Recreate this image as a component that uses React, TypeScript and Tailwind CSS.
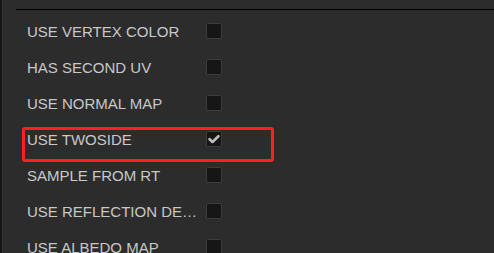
import React from 'react';

const options = [
  { label: 'USE VERTEX COLOR', checked: false },
  { label: 'HAS SECOND UV', checked: false },
  { label: 'USE NORMAL MAP', checked: false },
  { label: 'USE TWOSIDE', checked: true, highlight: true },
  { label: 'SAMPLE FROM RT', checked: false },
  { label: 'USE REFLECTION DEPTH', checked: false },
  { label: 'USE ALBEDO MAP', checked: false },
];

const Checkbox: React.FC<{ checked: boolean }> = ({ checked }) => (
  <div className="w-[16px] h-[16px] shrink-0 rounded-[2px] bg-[#161616] border border-[#3c3c3c] flex items-center justify-center">
    {checked && (
      <svg width="12" height="10" viewBox="0 0 12 10" fill="none">
        <path d="M1.6 5.2 L4.5 8 L10.4 2.2" stroke="#bdbdbd" strokeWidth="2.6" strokeLinecap="round" strokeLinejoin="round" />
      </svg>
    )}
  </div>
);

const App: React.FC = () => {
  return (
    <div
      className="w-[494px] h-[253px] overflow-hidden bg-[#2c2c2c] flex"
      style={{ fontFamily: '"Liberation Sans", Arial, sans-serif' }}
    >
      <div className="w-[3px] shrink-0 bg-[#161616] border-r border-[#3a3530]" />
      <div className="flex-1 pl-[13px]">
        <div className="mt-[9px] h-px bg-black" />
        <div className="mt-[3px] pl-[11px] flex flex-col">
          {options.map((opt) => (
            <div key={opt.label} className="relative h-[36px] flex items-center">
              <span className="w-[174px] mt-[1px] truncate text-[15px] leading-[18px] text-[#c8c8c8]">
                {opt.label}
              </span>
              <div className="ml-[5px] -mt-[1px]">
                <Checkbox checked={opt.checked} />
              </div>
              {opt.highlight && (
                <div className="absolute left-[-5px] top-[6px] w-[252px] h-[35px] border-[3px] border-[#ff1f1f] rounded-[3px] pointer-events-none" />
              )}
            </div>
          ))}
        </div>
      </div>
    </div>
  );
};

export default App;
